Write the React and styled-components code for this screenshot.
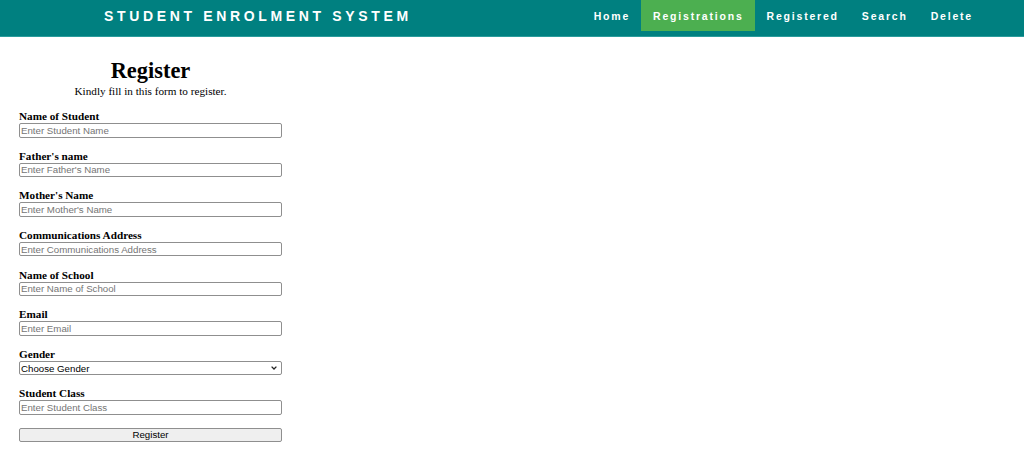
import React from "react";
import styled, { createGlobalStyle } from "styled-components";

const GlobalStyle = createGlobalStyle`
  html, body {
    margin: 0;
    padding: 0;
    background: #fff;
  }
  body {
    font-family: "Liberation Serif", "Times New Roman", serif;
    color: #000;
  }
`;

const chevron =
  "data:image/svg+xml;utf8,<svg xmlns='http://www.w3.org/2000/svg' width='6' height='4' viewBox='0 0 6 4'><path d='M0.6 0.6 L3 3 L5.4 0.6' fill='none' stroke='%23222' stroke-width='1.3'/></svg>";

const Header = styled.header`
  display: flex;
  align-items: flex-start;
  justify-content: space-between;
  height: 36px;
  padding: 0 40px 0 104px;
  background-color: #008080;
  border-bottom: 1px solid #2a9c9c;
`;

const Brand = styled.div`
  height: 31px;
  display: flex;
  align-items: center;
  color: #fff;
  font-family: "Liberation Sans", Arial, sans-serif;
  font-weight: bold;
  font-size: 14px;
  letter-spacing: 3.65px;
  white-space: nowrap;
`;

const Nav = styled.ul`
  display: flex;
  list-style: none;
  margin: 0;
  padding: 0;
`;

const NavItem = styled.li`
  height: 31px;
  display: flex;
  align-items: center;
  padding: 0 11px 0 12px;
  background-color: ${(props) => (props.active ? "#4caf50" : "transparent")};
  color: #fff;
  font-family: "Liberation Sans", Arial, sans-serif;
  font-weight: bold;
  font-size: 10.5px;
  letter-spacing: 1.8px;
  cursor: pointer;
`;

const Main = styled.main`
  width: 263px;
  margin-left: 19px;
  padding-top: 21px;
`;

const Title = styled.h1`
  margin: 0;
  font-size: 22.4px;
  line-height: 26px;
  font-weight: bold;
  text-align: center;
`;

const Subtitle = styled.p`
  margin: 1px 0 12px;
  font-size: 11.2px;
  line-height: 13px;
  text-align: center;
`;

const Field = styled.div`
  margin-bottom: 12.15px;
`;

const Label = styled.label`
  display: block;
  font-size: 11.2px;
  line-height: 13px;
  font-weight: bold;
`;

const Input = styled.input`
  box-sizing: border-box;
  display: block;
  width: 100%;
  height: 14.5px;
  margin: 0;
  padding: 0 1px;
  border: 1px solid #8f8f8f;
  border-radius: 2px;
  font-family: "Liberation Sans", Arial, sans-serif;
  font-size: 9.7px;
  color: #000;
  &::placeholder {
    color: #757575;
  }
`;

const Select = styled.select`
  box-sizing: border-box;
  display: block;
  width: 100%;
  height: 14.5px;
  margin: 0;
  padding: 0 1px;
  appearance: none;
  border: 1px solid #8f8f8f;
  border-radius: 2px;
  background: #fff url("${chevron}") no-repeat right 4px center;
  font-family: "Liberation Sans", Arial, sans-serif;
  font-size: 9.7px;
  color: #000;
`;

const Button = styled.button`
  box-sizing: border-box;
  display: block;
  width: 100%;
  height: 14.5px;
  margin: 13px 0 0;
  padding: 0;
  border: 1px solid #8f8f8f;
  border-radius: 2px;
  background-color: #efefef;
  font-family: "Liberation Sans", Arial, sans-serif;
  font-size: 9.7px;
  line-height: 12px;
  color: #000;
`;

const navLinks = ["Home", "Registrations", "Registered", "Search", "Delete"];

const fields = [
  { label: "Name of Student", placeholder: "Enter Student Name" },
  { label: "Father's name", placeholder: "Enter Father's Name" },
  { label: "Mother's Name", placeholder: "Enter Mother's Name" },
  { label: "Communications Address", placeholder: "Enter Communications Address" },
  { label: "Name of School", placeholder: "Enter Name of School" },
  { label: "Email", placeholder: "Enter Email" },
];

const App = () => {
  return (
    <>
      <GlobalStyle />
      <Header>
        <Brand>STUDENT ENROLMENT SYSTEM</Brand>
        <Nav>
          {navLinks.map((link) => (
            <NavItem key={link} active={link === "Registrations"}>
              {link}
            </NavItem>
          ))}
        </Nav>
      </Header>
      <Main>
        <Title>Register</Title>
        <Subtitle>Kindly fill in this form to register.</Subtitle>
        <form onSubmit={(e) => e.preventDefault()}>
          {fields.map((field) => (
            <Field key={field.label}>
              <Label>{field.label}</Label>
              <Input type="text" placeholder={field.placeholder} />
            </Field>
          ))}
          <Field>
            <Label>Gender</Label>
            <Select defaultValue="">
              <option value="">Choose Gender</option>
              <option value="male">Male</option>
              <option value="female">Female</option>
            </Select>
          </Field>
          <Field>
            <Label>Student Class</Label>
            <Input type="text" placeholder="Enter Student Class" />
          </Field>
          <Button type="submit">Register</Button>
        </form>
      </Main>
    </>
  );
};

export default App;
